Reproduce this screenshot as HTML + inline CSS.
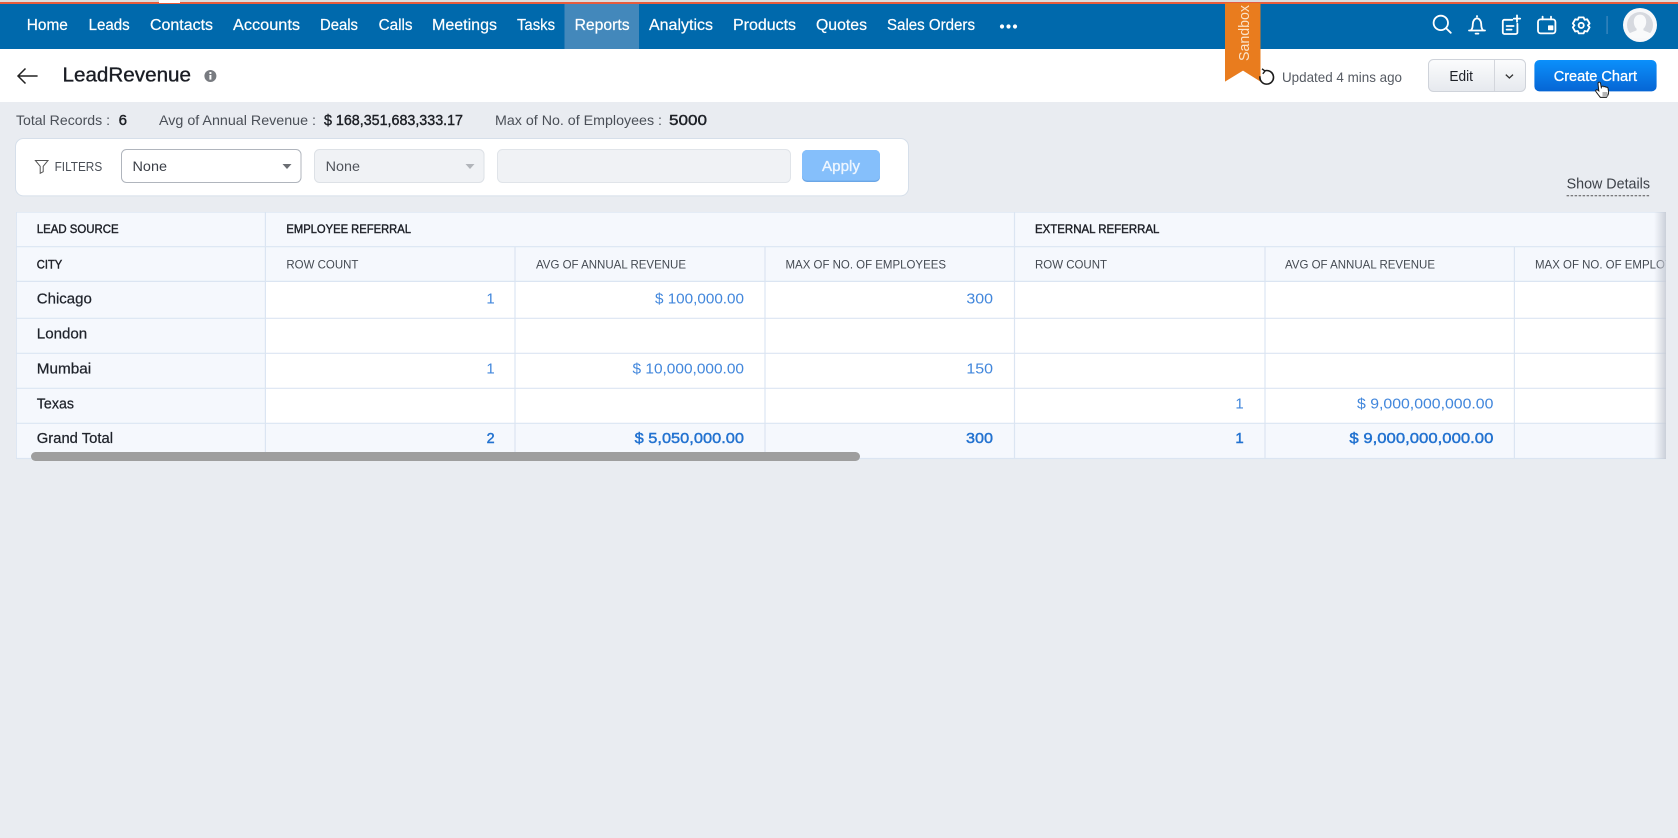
<!DOCTYPE html>
<html lang="en">
<head>
<meta charset="utf-8">
<title>LeadRevenue</title>
<style>
html,body{margin:0;padding:0;width:1678px;height:838px;overflow:hidden;background:#e9ecf1}
svg{display:block;position:absolute;left:0;top:0}
text{font-family:"Liberation Sans",sans-serif;white-space:pre}
.nav{font-size:15.4px;fill:#fff;stroke:#fff;stroke-width:.2}
.st{font-size:14px;fill:#4a4f57}
.stb{font-size:14.4px;fill:#1d2026;stroke:#1d2026;stroke-width:.4}
.hb{font-size:12px;fill:#1c1f26;stroke:#1c1f26;stroke-width:.4}
.hr{font-size:12px;fill:#444a52}
.rl{font-size:14.8px;fill:#1f232b;stroke:#1f232b;stroke-width:.25}
.v{font-size:15px;fill:#4287dc}
.vb{font-size:15px;fill:#2272d0;stroke:#2272d0;stroke-width:.45}
.ln{stroke:#dbe5f2;stroke-width:1.2}
</style>
</head>
<body>
<svg width="1678" height="838" viewBox="0 0 1678 838" xmlns="http://www.w3.org/2000/svg">
<defs>
<linearGradient id="gEdit" x1="0" y1="0" x2="0" y2="1"><stop offset="0" stop-color="#fbfcfd"/><stop offset="1" stop-color="#e6e9ee"/></linearGradient>
<linearGradient id="gCreate" x1="0" y1="0" x2="0" y2="1"><stop offset="0" stop-color="#0b90fb"/><stop offset="1" stop-color="#0665d4"/></linearGradient>
<linearGradient id="gShadow" x1="0" y1="0" x2="1" y2="0"><stop offset="0" stop-color="#c9ced8" stop-opacity="0"/><stop offset="1" stop-color="#c3c8d2" stop-opacity=".85"/></linearGradient>
<clipPath id="tclip"><rect x="16" y="212" width="1650" height="248"/></clipPath>
</defs>

<!-- page -->
<rect width="1678" height="838" fill="#e9ecf1"/>

<!-- top bar -->
<rect width="1678" height="2.4" fill="#dcdcdc"/>
<rect y="2" width="1678" height="2" fill="#e85c3c"/>
<rect x="159" y="0" width="21" height="3" fill="#fff"/>
<rect y="4" width="1678" height="45" fill="#0069ac"/>
<rect x="564.5" y="4" width="74.5" height="45" fill="#4388bb"/>

<text class="nav" x="26.8" y="30" textLength="41" lengthAdjust="spacingAndGlyphs">Home</text>
<text class="nav" x="88.6" y="30" textLength="41" lengthAdjust="spacingAndGlyphs">Leads</text>
<text class="nav" x="150" y="30" textLength="63" lengthAdjust="spacingAndGlyphs">Contacts</text>
<text class="nav" x="233" y="30" textLength="67" lengthAdjust="spacingAndGlyphs">Accounts</text>
<text class="nav" x="320" y="30" textLength="38" lengthAdjust="spacingAndGlyphs">Deals</text>
<text class="nav" x="378.6" y="30" textLength="34" lengthAdjust="spacingAndGlyphs">Calls</text>
<text class="nav" x="432" y="30" textLength="65" lengthAdjust="spacingAndGlyphs">Meetings</text>
<text class="nav" x="517" y="30" textLength="38" lengthAdjust="spacingAndGlyphs">Tasks</text>
<text class="nav" x="574.6" y="30" textLength="55" lengthAdjust="spacingAndGlyphs">Reports</text>
<text class="nav" x="649" y="30" textLength="64" lengthAdjust="spacingAndGlyphs">Analytics</text>
<text class="nav" x="733" y="30" textLength="63" lengthAdjust="spacingAndGlyphs">Products</text>
<text class="nav" x="816" y="30" textLength="51" lengthAdjust="spacingAndGlyphs">Quotes</text>
<text class="nav" x="887" y="30" textLength="88" lengthAdjust="spacingAndGlyphs">Sales Orders</text>
<circle cx="1002" cy="26.5" r="2.1" fill="#fff"/><circle cx="1008.5" cy="26.5" r="2.1" fill="#fff"/><circle cx="1015" cy="26.5" r="2.1" fill="#fff"/>

<!-- header icons -->
<g fill="none" stroke="#fff" stroke-width="1.8" stroke-linecap="round" stroke-linejoin="round">
  <circle cx="1440.8" cy="22.9" r="7.2"/><path d="M1446.2 28.4l4.6 4.4"/>
  <path d="M1469 30.5h16"/><path d="M1471 30.2c1.6-1.6 1.8-3.4 1.8-6.2a4.2 5.6 0 0 1 8.4 0c0 2.8.2 4.6 1.8 6.2"/><path d="M1477 16v.6"/><path d="M1475.6 33.6h2.8"/>
  <path d="M1512.4 19.8h-8a1.6 1.6 0 0 0-1.6 1.6v11a1.6 1.6 0 0 0 1.6 1.6h11.4a1.6 1.6 0 0 0 1.6-1.6v-8.6"/><path d="M1506.6 26h7M1506.6 29.6h5"/><path d="M1517 15.4v6.4M1513.8 18.6h6.4"/>
  <rect x="1538" y="19.4" width="17.4" height="14" rx="2.6"/><path d="M1542.6 16.6v2.8M1551 16.6v2.8"/>
  <circle cx="1581.2" cy="25.4" r="2.6"/>
  <path d="M1578.8 17.4h4.8l1 2.4 2.6-.5 2.4 4.2-1.7 1.9 1.7 1.9-2.4 4.2-2.6-.5-1 2.4h-4.8l-1-2.4-2.6.5-2.4-4.2 1.7-1.9-1.7-1.9 2.4-4.2 2.6.5z"/>
</g>
<rect x="1548" y="25.4" width="5.4" height="4.8" rx=".6" fill="#fff"/>
<rect x="1606.4" y="16" width="1.4" height="18" fill="#3a86bd"/>
<circle cx="1640" cy="25" r="17" fill="#f7f8fa"/>
<circle cx="1640" cy="25" r="13" fill="#d6d9df"/>
<path d="M1640 14.6c-3.8 0-6.2 3-6.2 7.2 0 3 1.2 5.6 2.8 7v1.4c-2.6 1.4-6.4 2-8.6 4.4l3 3.4h18l3-3.4c-2.2-2.4-6-3-8.6-4.4v-1.4c1.6-1.4 2.8-4 2.8-7 0-4.2-2.4-7.2-6.2-7.2z" fill="#f9fafb"/>

<!-- title bar -->
<rect y="49" width="1678" height="53" fill="#fff"/>
<path d="M37.6 76H18M25.5 68.5L18 76l7.5 7.5" fill="none" stroke="#222" stroke-width="1.5"/>
<text x="62.5" y="81.5" font-size="20" fill="#1a1d24" stroke="#1a1d24" stroke-width=".35" textLength="128.5" lengthAdjust="spacingAndGlyphs">LeadRevenue</text>
<circle cx="210.4" cy="76" r="6" fill="#787b80"/>
<rect x="209.4" y="75" width="2" height="4.6" fill="#fff"/><rect x="209.4" y="72" width="2" height="2" fill="#fff"/>

<text x="1282" y="82" font-size="13.8" fill="#565b63" textLength="120" lengthAdjust="spacingAndGlyphs">Updated 4 mins ago</text>

<!-- sandbox ribbon -->
<path d="M1225 3h35.5v78.6L1243 70.6 1225 81.6z" fill="#e97c1e"/>
<text transform="translate(1249 61) rotate(-90)" font-size="15" fill="#fae3c9" textLength="56" lengthAdjust="spacingAndGlyphs">Sandbox</text>

<!-- refresh -->
<path d="M1264.5 70.9A6.8 6.8 0 1 1 1260 76.2" fill="none" stroke="#1c1c1c" stroke-width="1.6"/>
<path d="M1262 68.8l3 2.2-2.2 2.8" fill="none" stroke="#1c1c1c" stroke-width="1.4"/>

<!-- edit -->
<rect x="1428.5" y="59.5" width="97" height="32" rx="5" fill="url(#gEdit)" stroke="#cfd3da"/>
<rect x="1494" y="60" width="1" height="31" fill="#d3d6dc"/>
<text x="1449.4" y="80.8" font-size="15" fill="#1e2128" textLength="23.6" lengthAdjust="spacingAndGlyphs">Edit</text>
<path d="M1505.8 74.6l3.6 3.4 3.6-3.4" fill="none" stroke="#333" stroke-width="1.3"/>

<!-- create chart -->
<rect x="1534.4" y="60" width="122.2" height="31.4" rx="5" fill="url(#gCreate)"/>
<text x="1553.7" y="81" font-size="15" fill="#fff" stroke="#fff" stroke-width=".3" textLength="83.3" lengthAdjust="spacingAndGlyphs">Create Chart</text>
<path d="M1598.2 82.5c1-.8 2.2-.2 2.4 1l.7 4 .5-1c.9-.7 1.9-.3 2.2.3.8-.5 1.8-.2 2.1.5.8-.4 1.7 0 1.9.8l.6 3.9c.1 2-1 4-2.2 5.4h-6c-1.4-1.7-3-3.6-4.6-6-.5-.9.5-2 1.6-1.5l1.4 1-.8-7.2c-.1-.3 0-.5.2-.7z" fill="#fff" stroke="#1a1a1a" stroke-width="1"/>
<rect x="1602.5" y="92" width="5" height="4.6" fill="#b5b5b5"/>

<!-- stats -->
<text class="st" x="16" y="125" textLength="94" lengthAdjust="spacingAndGlyphs">Total Records :</text>
<text class="stb" x="118.6" y="125" textLength="8.4" lengthAdjust="spacingAndGlyphs">6</text>
<text class="st" x="159" y="125" textLength="157" lengthAdjust="spacingAndGlyphs">Avg of Annual Revenue :</text>
<text class="stb" x="324" y="125" textLength="139" lengthAdjust="spacingAndGlyphs">$ 168,351,683,333.17</text>
<text class="st" x="495" y="125" textLength="167" lengthAdjust="spacingAndGlyphs">Max of No. of Employees :</text>
<text class="stb" x="669" y="125" textLength="38" lengthAdjust="spacingAndGlyphs">5000</text>

<!-- filter card -->
<rect x="15.5" y="138.5" width="893" height="57.4" rx="8" fill="#fff" stroke="#d6dfea"/>
<path d="M35.4 160.5h12.6l-4.8 5.8v5.4l-3 1.6v-7z" fill="none" stroke="#555" stroke-width="1"/>
<text x="54.6" y="171" font-size="13" fill="#4a4f57" textLength="47.6" lengthAdjust="spacingAndGlyphs">FILTERS</text>
<rect x="121.5" y="149.5" width="179.5" height="33" rx="5" fill="#fff" stroke="#b0b5bd"/>
<text x="132.5" y="171" font-size="14" fill="#3b3f47" textLength="34.5" lengthAdjust="spacingAndGlyphs">None</text>
<path d="M282.5 164h9l-4.5 5z" fill="#6b6e73"/>
<rect x="314.5" y="149.5" width="169.5" height="33" rx="5" fill="#f0f2f5" stroke="#dde1e6"/>
<text x="325.7" y="171" font-size="14" fill="#50545b" textLength="34.3" lengthAdjust="spacingAndGlyphs">None</text>
<path d="M465.5 164h9l-4.5 5z" fill="#b2b5ba"/>
<rect x="497.5" y="149.5" width="293" height="33" rx="5" fill="#f0f2f5" stroke="#e0e4e9"/>
<rect x="802" y="150" width="78" height="32" rx="5" fill="#6ba6e6"/>
<rect x="802" y="150" width="78" height="30.6" rx="5" fill="#85bffb"/>
<text x="822" y="171" font-size="14.6" fill="#eef6ff" stroke="#eef6ff" stroke-width=".35" textLength="38" lengthAdjust="spacingAndGlyphs">Apply</text>

<!-- show details -->
<text x="1566.6" y="188.6" font-size="14.4" fill="#3d4148" textLength="83.4" lengthAdjust="spacingAndGlyphs">Show Details</text>
<path d="M1566.6 195.8H1650" stroke="#555" stroke-width="1" stroke-dasharray="2.5 1.5"/>

<!-- table -->
<g clip-path="url(#tclip)">
  <rect x="16" y="212" width="1650" height="247" fill="#f5f8fd"/>
  <rect x="265.4" y="282" width="1401" height="141" fill="#fff"/>
  <g class="ln">
    <path d="M16 212H1666M16 246.7H1666M16 281.4H1666M16 318.3H1666M16 353.3H1666M16 388.3H1666M16 423.3H1666M16 458.5H1666"/>
    <path d="M16.3 212V458.5M265.4 212V459M515 246.7V459M765 246.7V459M1014.5 212V459M1265 246.7V459M1514.4 246.7V459"/>
  </g>

  <text class="hb" x="36.8" y="233" textLength="81.8" lengthAdjust="spacingAndGlyphs">LEAD SOURCE</text>
  <text class="hb" x="286.4" y="233" textLength="124.6" lengthAdjust="spacingAndGlyphs">EMPLOYEE REFERRAL</text>
  <text class="hb" x="1035" y="233" textLength="124.4" lengthAdjust="spacingAndGlyphs">EXTERNAL REFERRAL</text>

  <text class="hb" x="36.8" y="268.3" textLength="25.4" lengthAdjust="spacingAndGlyphs">CITY</text>
  <text class="hr" x="286.4" y="268.3" textLength="72" lengthAdjust="spacingAndGlyphs">ROW COUNT</text>
  <text class="hr" x="536" y="268.3" textLength="150" lengthAdjust="spacingAndGlyphs">AVG OF ANNUAL REVENUE</text>
  <text class="hr" x="785.5" y="268.3" textLength="160.5" lengthAdjust="spacingAndGlyphs">MAX OF NO. OF EMPLOYEES</text>
  <text class="hr" x="1035" y="268.3" textLength="72" lengthAdjust="spacingAndGlyphs">ROW COUNT</text>
  <text class="hr" x="1285" y="268.3" textLength="150" lengthAdjust="spacingAndGlyphs">AVG OF ANNUAL REVENUE</text>
  <text class="hr" x="1535" y="268.3" textLength="160.5" lengthAdjust="spacingAndGlyphs">MAX OF NO. OF EMPLOYEES</text>

  <text class="rl" x="36.8" y="303.3" textLength="55" lengthAdjust="spacingAndGlyphs">Chicago</text>
  <text class="rl" x="36.8" y="338.3" textLength="50.4" lengthAdjust="spacingAndGlyphs">London</text>
  <text class="rl" x="36.8" y="373.3" textLength="54.4" lengthAdjust="spacingAndGlyphs">Mumbai</text>
  <text class="rl" x="36.8" y="408.3" textLength="37.2" lengthAdjust="spacingAndGlyphs">Texas</text>
  <text class="rl" x="36.8" y="443" textLength="76.2" lengthAdjust="spacingAndGlyphs">Grand Total</text>

  <text class="v" x="486.4" y="303.3">1</text>
  <text class="v" x="655" y="303.3" textLength="89" lengthAdjust="spacingAndGlyphs">$ 100,000.00</text>
  <text class="v" x="966.4" y="303.3" textLength="26.6" lengthAdjust="spacingAndGlyphs">300</text>

  <text class="v" x="486.4" y="373.3">1</text>
  <text class="v" x="632.5" y="373.3" textLength="111.5" lengthAdjust="spacingAndGlyphs">$ 10,000,000.00</text>
  <text class="v" x="966.4" y="373.3" textLength="26.6" lengthAdjust="spacingAndGlyphs">150</text>

  <text class="v" x="1235.4" y="408.3">1</text>
  <text class="v" x="1357" y="408.3" textLength="136.4" lengthAdjust="spacingAndGlyphs">$ 9,000,000,000.00</text>

  <text class="vb" x="486.6" y="443" textLength="8" lengthAdjust="spacingAndGlyphs">2</text>
  <text class="vb" x="634.6" y="443" textLength="109.4" lengthAdjust="spacingAndGlyphs">$ 5,050,000.00</text>
  <text class="vb" x="966" y="443" textLength="27" lengthAdjust="spacingAndGlyphs">300</text>
  <text class="vb" x="1235.4" y="443">1</text>
  <text class="vb" x="1349.4" y="443" textLength="144" lengthAdjust="spacingAndGlyphs">$ 9,000,000,000.00</text>

  <rect x="1654" y="212" width="12" height="247" fill="url(#gShadow)"/>
</g>

<!-- scrollbar -->
<rect x="31" y="452" width="829" height="9" rx="4.5" fill="#9e9e9e"/>
</svg>
</body>
</html>
